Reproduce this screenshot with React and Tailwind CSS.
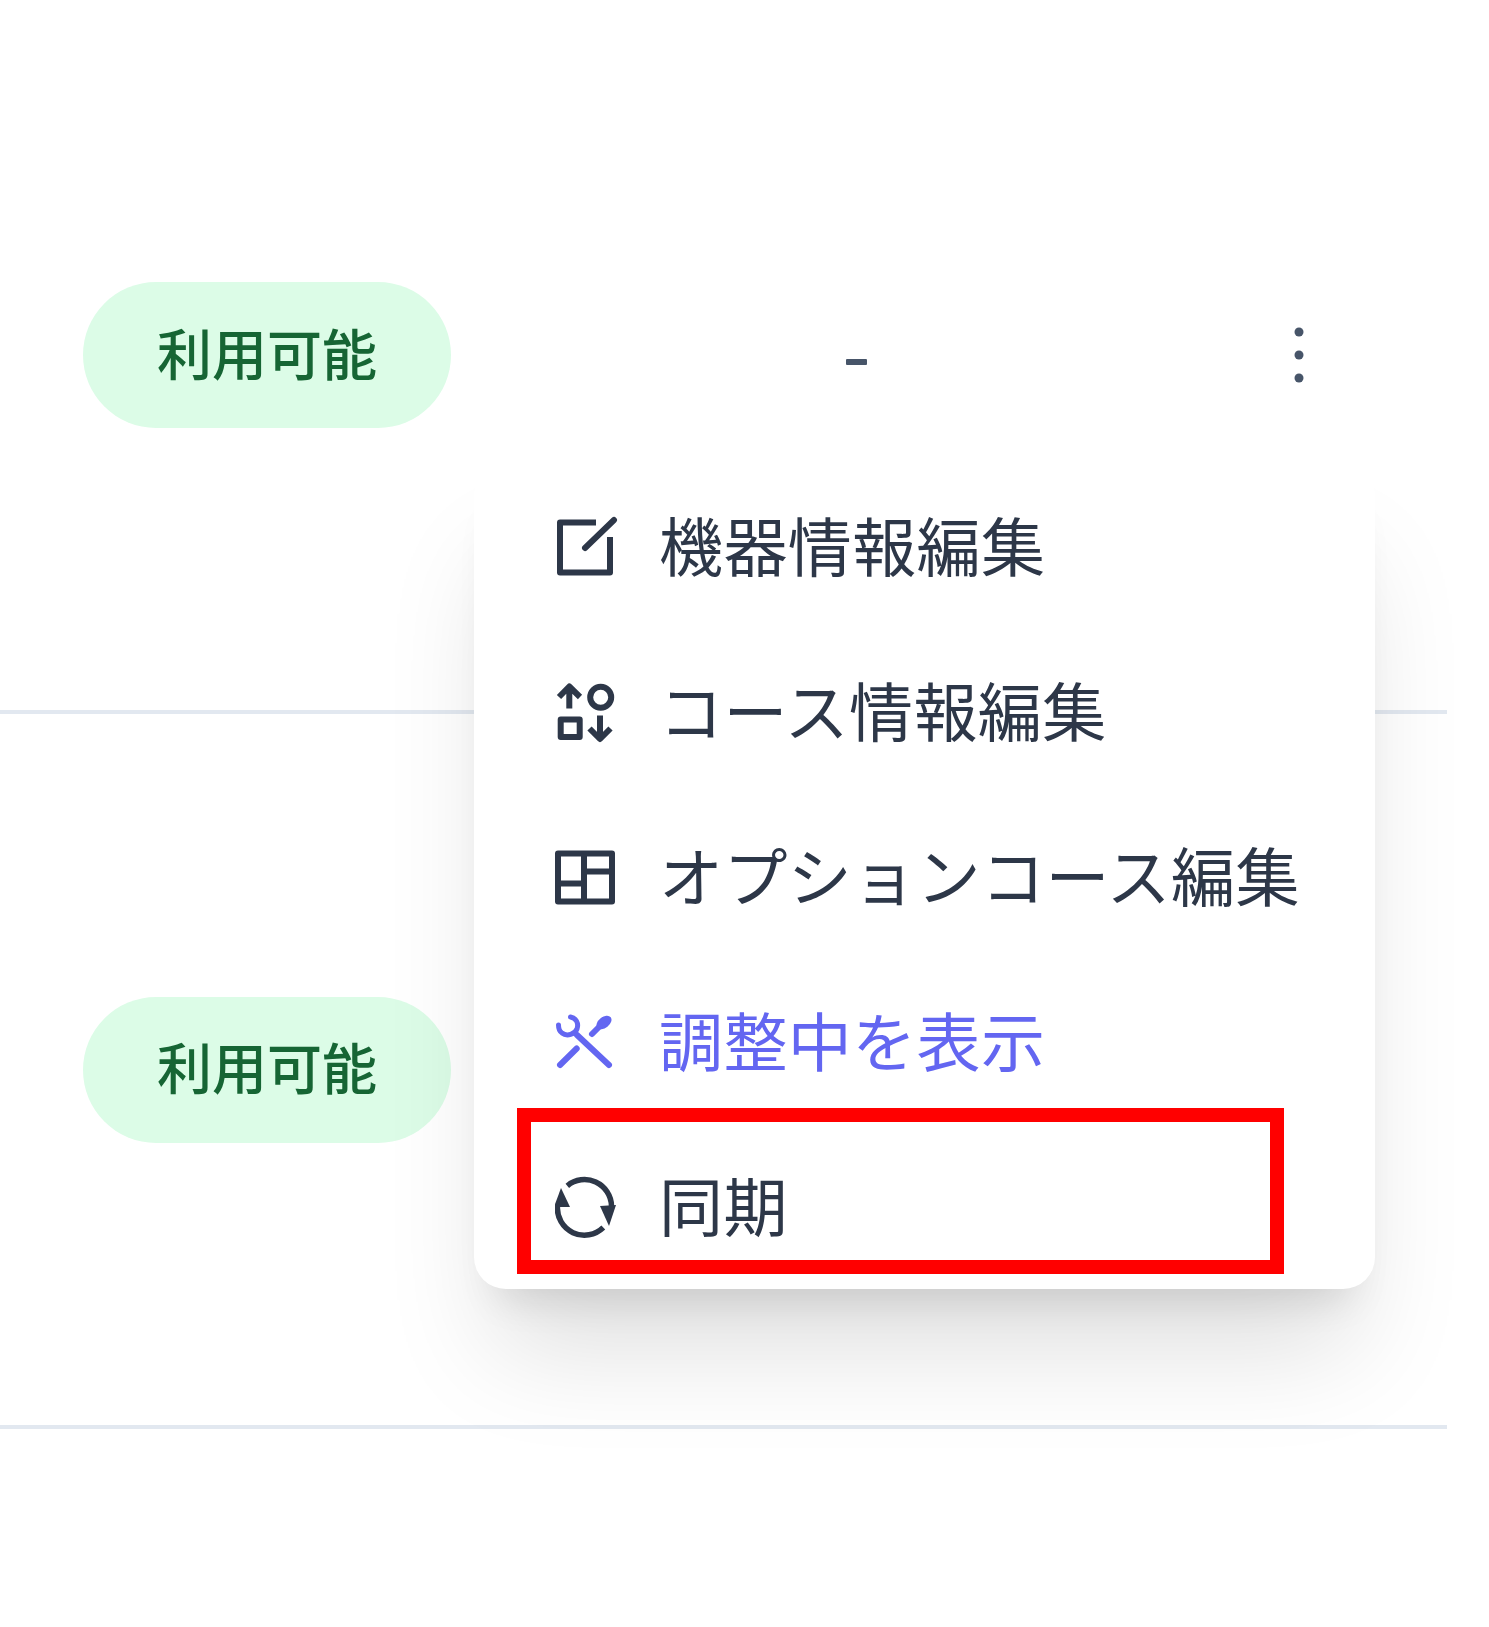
const font = { fontFamily: '"Inter", "Noto Sans CJK JP", sans-serif' };

function Icon({ children, ...rest }) {
  return (
    <svg width="64" height="64" viewBox="0 0 64 64" fill="none" stroke="currentColor" strokeWidth="6" {...rest}>
      {children}
    </svg>
  );
}
function EditIcon() {
  return (
    <Icon strokeLinecap="round" strokeLinejoin="round">
      <path d="M41 6.5H5v50h50V21" strokeLinecap="butt" />
      <path d="M30 32 59 4" />
    </Icon>
  );
}
function SortIcon() {
  return (
    <Icon strokeLinejoin="round">
      <path d="M14.3 27.5V5M4 16 14.3 5.5 25 16" />
      <circle cx="45.7" cy="16.2" r="10.5" />
      <rect x="5.7" y="38.5" width="19" height="17.5" />
      <path d="M45 34.5V57M34.5 47.5 45 58l10.5-10.5" />
    </Icon>
  );
}
function GridIcon() {
  return (
    <Icon strokeLinejoin="round">
      <rect x="3" y="7.5" width="54" height="48" />
      <path d="M29 7.5v48M3 37.5h26M29 25.5h28" />
    </Icon>
  );
}
function ToolsIcon() {
  return (
    <Icon strokeLinecap="round" strokeLinejoin="round">
      <path d="M15.5 6C21 7 24 12 22 18 20 23 12 26 7 22 4 20 3.5 17 3.5 14" strokeWidth="5" />
      <path d="M22 24 54 54" />
      <path d="M21.7 37.5 5 54" />
      <path d="M37 23 45 15" />
      <ellipse cx="49" cy="11.5" rx="8.5" ry="5.5" fill="currentColor" stroke="none" transform="rotate(-38 49 11.5)" />
    </Icon>
  );
}
function SyncIcon() {
  return (
    <Icon strokeWidth="5.5">
      <path d="M12.3 9.8A27 27 0 0 1 56.5 30" />
      <path d="M48.3 51.5A27 27 0 0 1 2.5 30" />
      <path d="M6 12-1 31h16z" fill="currentColor" stroke="none" />
      <path d="M54 50 45 30 61 29z" fill="currentColor" stroke="none" />
    </Icon>
  );
}
function MoreIcon() {
  return (
    <svg width="10" height="56" viewBox="0 0 10 56" fill="currentColor">
      <circle cx="5" cy="5" r="4.5" />
      <circle cx="5" cy="28" r="4.5" />
      <circle cx="5" cy="51" r="4.5" />
    </svg>
  );
}

function Pill() {
  return (
    <span className="flex h-[146px] w-[368px] shrink-0 items-center justify-center rounded-full bg-[#dcfce7] text-[55px] font-medium text-[#166534]">
      利用可能
    </span>
  );
}

const items = [
  { icon: <EditIcon />, label: '機器情報編集' },
  { icon: <SortIcon />, label: 'コース情報編集' },
  { icon: <GridIcon />, label: 'オプションコース編集' },
  { icon: <ToolsIcon />, label: '調整中を表示', accent: true },
  { icon: <SyncIcon />, label: '同期', framed: true },
];

export default function App() {
  return (
    <div className="relative h-[1627px] overflow-hidden bg-white" style={font}>
      <div className="w-[1447px]">
        <div className="flex h-[714px] items-center border-b-4 border-[#e2e8f0] pl-[83px]">
          <Pill />
          <span className="ml-[395px] mt-[13px] h-[6px] w-[21px] rounded-[1px] bg-[#475569]" />
          <span className="ml-[427px] text-[#475569]"><MoreIcon /></span>
        </div>
        <div className="flex h-[715px] items-center border-b-4 border-[#e2e8f0] pl-[83px]">
          <Pill />
        </div>
      </div>
      <div className="absolute left-[474px] top-[465px] w-[901px] rounded-[32px] bg-white pl-[81px] shadow-[0_80px_110px_-20px_rgba(0,0,0,0.13),0_32px_40px_-24px_rgba(0,0,0,0.12)]">
        <div className="flex h-[824px] flex-col">
          {items.map((item) => (
            <div
              key={item.label}
              className={`relative flex h-[165px] shrink-0 items-center gap-[40px] text-[64px] leading-none tracking-[0.4px] ${item.accent ? 'text-[#6366f1]' : 'text-[#2d3748]'}`}
            >
              <span className="shrink-0">{item.icon}</span>
              <span className="whitespace-nowrap">{item.label}</span>
              {item.framed && (
                <span className="absolute left-[-38px] top-[-17px] h-[166px] w-[767px] border-[14px] border-[#ff0000]" />
              )}
            </div>
          ))}
        </div>
      </div>
    </div>
  );
}
